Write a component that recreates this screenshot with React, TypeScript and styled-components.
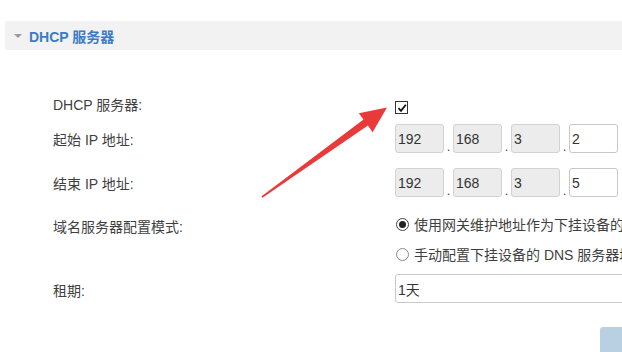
import React from "react";
import styled, { createGlobalStyle } from "styled-components";

const GlobalStyle = createGlobalStyle`
  html, body { margin: 0; padding: 0; background: #fff; }
  body { font-family: "Liberation Sans", Arial, "Noto Sans CJK SC", sans-serif; color: #333; }
`;

const Page = styled.div`
  position: relative;
  width: 622px;
  height: 352px;
  overflow: hidden;
  background: #fff;
`;

const Header = styled.div`
  margin: 21px 0 0 5px;
  height: 29px;
  display: flex;
  align-items: center;
  gap: 7px;
  padding-left: 9px;
  background: #f2f2f2;
  border-radius: 3px 0 0 3px;
  box-shadow: 0 0 1px rgba(0, 0, 0, 0.06);
`;

const Caret = styled.span`
  width: 0;
  height: 0;
  border-left: 4px solid transparent;
  border-right: 4px solid transparent;
  border-top: 4px solid #9a9a9a;
  margin-top: 1px;
`;

const HeaderTitle = styled.span`
  font-size: 14px;
  font-weight: bold;
  color: #3b7bc6;
`;

const Form = styled.div`
  margin-top: 46px;
  display: flex;
  flex-direction: column;
`;

const Row = styled.div<{ $top: number; $h: number; $align?: string }>`
  display: grid;
  grid-template-columns: 342px 1fr;
  padding-left: 53px;
  margin-top: ${(p) => p.$top}px;
  min-height: ${(p) => p.$h}px;
  align-items: ${(p) => p.$align || "center"};
`;

const Label = styled.div<{ $pad?: number }>`
  font-size: 14px;
  color: #3f3f3f;
  line-height: 18px;
  padding-top: ${(p) => p.$pad || 0}px;
  white-space: nowrap;
`;

const Control = styled.div`
  display: flex;
  min-width: 0;
  overflow: hidden;
`;

const CheckBox = styled.span`
  width: 11px;
  height: 11px;
  border: 1px solid #333;
  background: #fff;
  display: flex;
  align-items: center;
  justify-content: center;
  margin-top: 5px;
`;

const IpGroup = styled.div`
  display: flex;
  align-items: stretch;
`;

const IpBox = styled.div<{ $disabled?: boolean }>`
  box-sizing: border-box;
  width: 49px;
  height: 29px;
  border: 1px solid ${(p) => (p.$disabled ? "#d2d2d2" : "#c8c8c8")};
  background: ${(p) => (p.$disabled ? "#ececec" : "#fff")};
  border-radius: 3px;
  font-size: 14px;
  color: #333;
  display: flex;
  align-items: center;
  padding-left: 2px;
`;

const Dot = styled.span`
  width: 9px;
  text-align: center;
  font-size: 13px;
  color: #444;
  align-self: flex-end;
  line-height: 12px;
`;

const RadioList = styled.div`
  display: flex;
  flex-direction: column;
  gap: 12px;
  min-width: 0;
  overflow: hidden;
`;

const RadioLine = styled.div`
  display: flex;
  align-items: center;
  gap: 5px;
  height: 18px;
  font-size: 14px;
  color: #3f3f3f;
  white-space: nowrap;
  padding-left: 1px;
`;

const RadioCircle = styled.span<{ $on?: boolean }>`
  box-sizing: border-box;
  flex: none;
  width: 13px;
  height: 13px;
  border-radius: 50%;
  border: 1px solid ${(p) => (p.$on ? "#444" : "#8a8a8a")};
  display: flex;
  align-items: center;
  justify-content: center;
  &::after {
    content: "";
    display: ${(p) => (p.$on ? "block" : "none")};
    width: 7px;
    height: 7px;
    border-radius: 50%;
    background: #222;
  }
`;

const TextBox = styled.div`
  box-sizing: border-box;
  width: 260px;
  flex: none;
  height: 29px;
  border: 1px solid #c8c8c8;
  border-radius: 3px;
  background: #fff;
  display: flex;
  align-items: center;
  padding-left: 2px;
  font-size: 14px;
  color: #333;
`;

const ButtonRow = styled.div`
  margin-top: 24px;
  padding-left: 600px;
`;

const SaveButton = styled.div`
  width: 60px;
  height: 30px;
  background: #b9d0e2;
  border-radius: 3px;
`;

const ArrowLayer = styled.svg`
  position: absolute;
  left: 0;
  top: 0;
  pointer-events: none;
`;

const Ip = ({ parts }: { parts: string[] }) => (
  <IpGroup>
    {parts.map((p, i) => (
      <React.Fragment key={i}>
        <IpBox $disabled={i < 3}>{p}</IpBox>
        {i < 3 && <Dot>.</Dot>}
      </React.Fragment>
    ))}
  </IpGroup>
);

export default function App() {
  return (
    <>
      <GlobalStyle />
      <Page>
        <Header>
          <Caret />
          <HeaderTitle>DHCP 服务器</HeaderTitle>
        </Header>
        <Form>
          <Row $top={0} $h={18} $align="start">
            <Label $pad={0}>DHCP 服务器:</Label>
            <Control>
              <CheckBox>
                <svg width="10" height="10" viewBox="0 0 10 10">
                  <path d="M1.5 5.2 L4 7.8 L8.8 1.8" fill="none" stroke="#111" strokeWidth="1.8" />
                </svg>
              </CheckBox>
            </Control>
          </Row>
          <Row $top={10} $h={29}>
            <Label $pad={3}>起始 IP 地址:</Label>
            <Control>
              <Ip parts={["192", "168", "3", "2"]} />
            </Control>
          </Row>
          <Row $top={15} $h={29}>
            <Label $pad={3}>结束 IP 地址:</Label>
            <Control>
              <Ip parts={["192", "168", "3", "5"]} />
            </Control>
          </Row>
          <Row $top={18} $h={48} $align="start">
            <Label $pad={3}>域名服务器配置模式:</Label>
            <RadioList>
              <RadioLine>
                <RadioCircle $on />
                使用网关维护地址作为下挂设备的DNS服务器地址
              </RadioLine>
              <RadioLine>
                <RadioCircle />
                手动配置下挂设备的 DNS 服务器地址
              </RadioLine>
            </RadioList>
          </Row>
          <Row $top={11} $h={29}>
            <Label $pad={5}>租期:</Label>
            <Control>
              <TextBox>1天</TextBox>
            </Control>
          </Row>
          <ButtonRow>
            <SaveButton />
          </ButtonRow>
        </Form>
        <ArrowLayer width="622" height="352" viewBox="0 0 622 352">
          <polygon
            points="261.3,196.5 363.5,119.6 358.8,113.3 387,107.6 372.6,132.2 367.9,125.6 262.5,197.7"
            fill="#e83a3a"
          />
        </ArrowLayer>
      </Page>
    </>
  );
}
